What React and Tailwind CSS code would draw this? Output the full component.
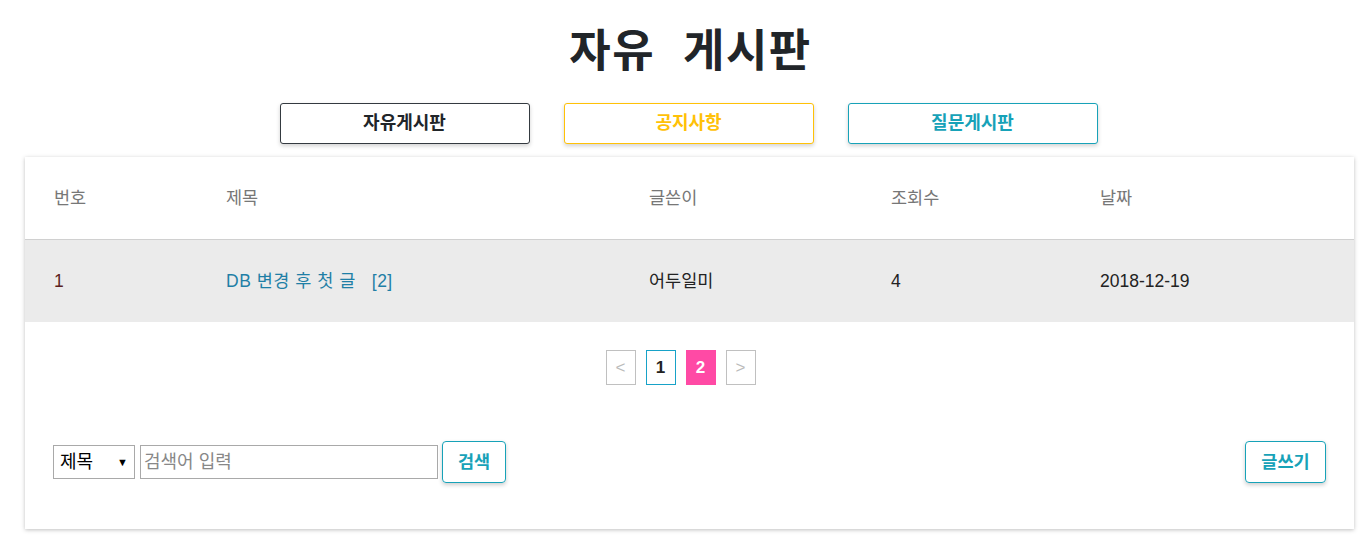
import React from 'react'

const KR = "font-['Liberation_Sans','Noto_Sans_CJK_KR',sans-serif]"

function TabButton({ label, className }) {
  return (
    <button
      type="button"
      className={`w-[250px] h-[41px] rounded-[3px] border bg-white text-[18px] font-bold shadow-[0_2px_4px_rgba(0,0,0,0.18)] ${className}`}
    >
      {label}
    </button>
  )
}

function PageBox({ children, className }) {
  return (
    <div className={`w-[30px] h-[35px] flex items-center justify-center border text-[17px] ${className}`}>
      {children}
    </div>
  )
}

export default function App() {
  const cols = ['w-[172px]', 'w-[423px]', 'w-[242px]', 'w-[209px]', 'flex-1']

  return (
    <div className={`${KR} bg-white min-h-[545px] w-[1370px] pt-[22px]`}>
      <h1 className="text-center text-[45px] leading-[60px] font-bold text-[#212529] tracking-[1.5px] pl-[11px]">
        자유&nbsp;&nbsp;게시판
      </h1>

      <div className="flex justify-center gap-[34px] mt-[21px] pl-[7px]">
        <TabButton label="자유게시판" className="border-[#343a40] text-[#212529]" />
        <TabButton label="공지사항" className="border-[#ffc107] text-[#ffc107]" />
        <TabButton label="질문게시판" className="border-[#17a2b8] text-[#17a2b8]" />
      </div>

      <div className="mx-[25px] mt-[13px] w-[1329px] bg-white shadow-[0_1px_4px_rgba(0,0,0,0.25)] pb-[46px]">
        <div className="flex items-center h-[83px] pl-[29px] border-b border-[#d0d0d0] text-[17.5px] text-[#777]">
          {['번호', '제목', '글쓴이', '조회수', '날짜'].map((h, i) => (
            <div key={h} className={cols[i]}>{h}</div>
          ))}
        </div>
        <div className="flex items-center h-[82px] pl-[29px] bg-[#ebebeb] text-[17.5px] text-[#222]">
          <div className={`${cols[0]} text-[#5b1f1f]`}>1</div>
          <div className={`${cols[1]} text-[#1f7fa6] tracking-[0.5px]`}>
            DB 변경 후 첫 글<span className="ml-[16px]">[2]</span>
          </div>
          <div className={cols[2]}>어두일미</div>
          <div className={cols[3]}>4</div>
          <div className={cols[4]}>2018-12-19</div>
        </div>

        <div className="flex justify-center gap-[10px] mt-[28px] pr-[18px]">
          <PageBox className="border-[#c0c0c0] text-[#bbb]">&lt;</PageBox>
          <PageBox className="border-[#17a2c8] text-[#222] font-bold">1</PageBox>
          <PageBox className="border-[#ff4aa5] bg-[#ff4aa5] text-white font-bold">2</PageBox>
          <PageBox className="border-[#c0c0c0] text-[#bbb]">&gt;</PageBox>
        </div>

        <div className="flex items-center justify-between mt-[56px] pl-[28px] pr-[28px]">
          <div className="flex items-center">
            <div className="w-[82px] h-[34px] border border-[#a9a9a9] flex items-center justify-between px-[6px] text-[18px] text-black">
              <span>제목</span>
              <span className="text-[11px]">▼</span>
            </div>
            <div className="ml-[5px] w-[298px] h-[34px] border border-[#a9a9a9] flex items-center px-[3px] text-[18px] text-[#888]">
              검색어 입력
            </div>
            <button
              type="button"
              className="ml-[4px] w-[64px] h-[42px] rounded-[4px] border border-[#17a2b8] text-[#17a2b8] text-[17.5px] font-bold shadow-[0_2px_4px_rgba(0,0,0,0.2)]"
            >
              검색
            </button>
          </div>
          <button
            type="button"
            className="w-[81px] h-[42px] rounded-[4px] border border-[#17a2b8] text-[#17a2b8] text-[17.5px] font-bold shadow-[0_2px_4px_rgba(0,0,0,0.2)]"
          >
            글쓰기
          </button>
        </div>
      </div>
    </div>
  )
}
